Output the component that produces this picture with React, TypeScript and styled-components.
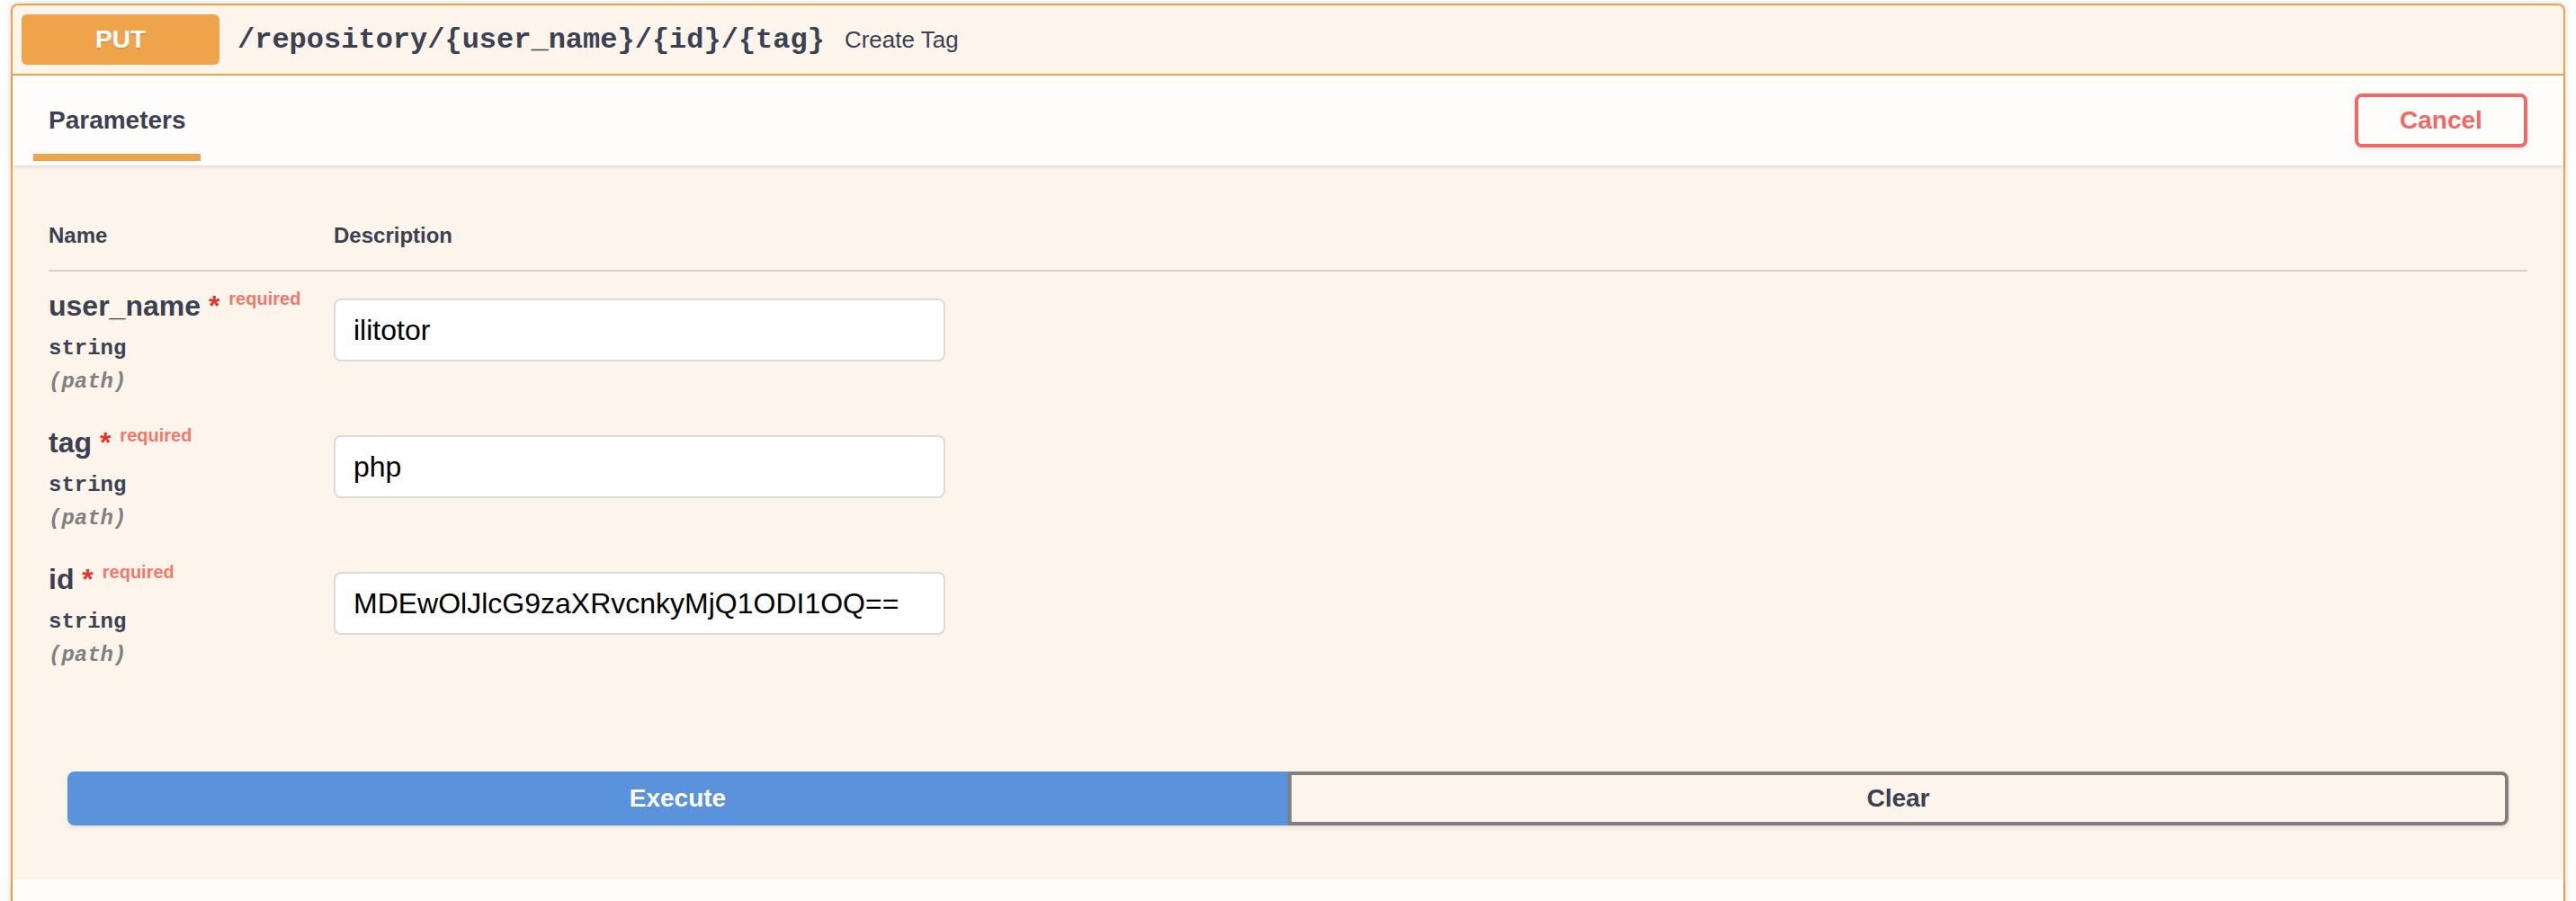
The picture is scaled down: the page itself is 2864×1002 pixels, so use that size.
import React from "react";
import styled, { createGlobalStyle } from "styled-components";

const ORANGE = "#efa44c";
const TEXT = "#3b4151";
const SANS = `"Liberation Sans", Arial, Helvetica, sans-serif`;
const MONO = `"Liberation Mono", "Courier New", monospace`;

const GlobalStyle = createGlobalStyle`
  html, body {
    margin: 0;
    padding: 0;
    background: #ffffff;
    overflow: hidden;
  }
  body {
    font-family: ${SANS};
    color: ${TEXT};
  }
  * { box-sizing: border-box; }
`;

const Page = styled.div`
  padding: 4px 12px 0;
`;

const OpBlock = styled.section`
  border: 2px solid ${ORANGE};
  border-radius: 8px;
  background: #fdf5ec;
  box-shadow: 0 0 6px rgba(0, 0, 0, 0.19);
`;

const Summary = styled.div`
  display: flex;
  align-items: center;
  padding: 10px;
  border-bottom: 2px solid ${ORANGE};
`;

const MethodBadge = styled.span`
  display: inline-block;
  width: 220px;
  height: 56px;
  line-height: 56px;
  border-radius: 6px;
  background: ${ORANGE};
  color: #ffffff;
  font-family: ${SANS};
  font-size: 28px;
  font-weight: 700;
  text-align: center;
  text-shadow: 0 2px 0 rgba(0, 0, 0, 0.1);
`;

const SummaryPath = styled.span`
  padding: 0 22px 0 20px;
  font-family: ${MONO};
  font-size: 32px;
  font-weight: 700;
  color: ${TEXT};
`;

const SummaryDescription = styled.span`
  font-family: ${SANS};
  font-size: 26px;
  color: ${TEXT};
`;

const SectionHeader = styled.div`
  display: flex;
  align-items: center;
  justify-content: space-between;
  min-height: 100px;
  padding: 16px 40px;
  background: rgba(255, 255, 255, 0.8);
  box-shadow: 0 2px 4px rgba(0, 0, 0, 0.1);
`;

const TabTitle = styled.h4`
  margin: 0;
  font-family: ${SANS};
  font-size: 28px;
  line-height: 32px;
  font-weight: 700;
  color: ${TEXT};
`;

const ActiveTabLabel = styled.span`
  position: relative;
  &::after {
    content: "";
    position: absolute;
    left: 50%;
    bottom: -30px;
    width: 122%;
    height: 8px;
    transform: translateX(-50%);
    background: ${ORANGE};
  }
`;

const CancelButton = styled.button`
  width: 192px;
  height: 60px;
  padding: 0;
  border: 4px solid #ee6a66;
  border-radius: 8px;
  background: transparent;
  color: #ee6a66;
  font-family: ${SANS};
  font-size: 28px;
  font-weight: 700;
  box-shadow: 0 2px 4px rgba(0, 0, 0, 0.1);
  cursor: pointer;
`;

const TableContainer = styled.div`
  padding: 40px;
`;

const TableRow = styled.div<{ $header?: boolean }>`
  display: grid;
  grid-template-columns: 317px 1fr;
  align-items: start;
  ${(p) =>
    p.$header
      ? `border-bottom: 2px solid rgba(59, 65, 81, 0.2);`
      : `height: 152px; padding-top: 20px;`}
`;

const HeaderCell = styled.div`
  padding: 24px 0;
  font-family: ${SANS};
  font-size: 24px;
  line-height: 28px;
  font-weight: 700;
  color: ${TEXT};
`;

const NameCell = styled.div`
  display: flex;
  flex-direction: column;
`;

const ParamName = styled.div`
  font-family: ${SANS};
  font-size: 32px;
  line-height: 37px;
  font-weight: 700;
  color: ${TEXT};
  white-space: nowrap;
`;

const Asterisk = styled.span`
  color: #ea3323;
`;

const RequiredTag = styled.span`
  position: relative;
  top: -12px;
  padding: 10px;
  font-size: 20px;
  font-weight: 700;
  color: #f2786c;
`;

const ParamType = styled.div`
  padding: 11px 0 10px;
  font-family: ${MONO};
  font-size: 24px;
  line-height: 27px;
  font-weight: 700;
  color: ${TEXT};
`;

const ParamIn = styled.div`
  font-family: ${MONO};
  font-size: 24px;
  line-height: 27px;
  font-weight: 700;
  font-style: italic;
  color: #808080;
`;

const TextInput = styled.input`
  display: block;
  width: 680px;
  height: 70px;
  margin: 10px 0 0;
  padding: 0 20px;
  border: 2px solid #dbdbdb;
  border-radius: 8px;
  background: #ffffff;
  color: #000000;
  font-family: ${SANS};
  font-size: 32px;
  outline: none;
`;

const BtnGroup = styled.div`
  display: flex;
  padding: 60px 61px;
`;

const GroupButton = styled.button<{ $variant: "execute" | "clear" }>`
  flex: 1;
  height: 60px;
  padding: 0;
  border: 4px solid ${(p) => (p.$variant === "execute" ? "#5a92dc" : "#808080")};
  border-radius: ${(p) => (p.$variant === "execute" ? "8px 0 0 8px" : "0 8px 8px 0")};
  background: ${(p) => (p.$variant === "execute" ? "#5a92dc" : "transparent")};
  color: ${(p) => (p.$variant === "execute" ? "#ffffff" : TEXT)};
  font-family: ${SANS};
  font-size: 28px;
  font-weight: 700;
  box-shadow: 0 2px 4px rgba(0, 0, 0, 0.1);
  cursor: pointer;
`;

type Param = { name: string; value: string };

const params: Param[] = [
  { name: "user_name", value: "ilitotor" },
  { name: "tag", value: "php" },
  { name: "id", value: "MDEwOlJlcG9zaXRvcnkyMjQ1ODI1OQ==" },
];

export default function App() {
  return (
    <>
      <GlobalStyle />
      <Page>
        <OpBlock>
          <Summary>
            <MethodBadge>PUT</MethodBadge>
            <SummaryPath>/repository/{"{user_name}"}/{"{id}"}/{"{tag}"}</SummaryPath>
            <SummaryDescription>Create Tag</SummaryDescription>
          </Summary>

          <SectionHeader>
            <TabTitle>
              <ActiveTabLabel>Parameters</ActiveTabLabel>
            </TabTitle>
            <CancelButton>Cancel</CancelButton>
          </SectionHeader>

          <TableContainer>
            <TableRow $header>
              <HeaderCell>Name</HeaderCell>
              <HeaderCell>Description</HeaderCell>
            </TableRow>
            {params.map((p) => (
              <TableRow key={p.name}>
                <NameCell>
                  <ParamName>
                    {p.name}
                    <Asterisk>{"\u00a0*"}</Asterisk>
                    <RequiredTag>required</RequiredTag>
                  </ParamName>
                  <ParamType>string</ParamType>
                  <ParamIn>(path)</ParamIn>
                </NameCell>
                <div>
                  <TextInput defaultValue={p.value} />
                </div>
              </TableRow>
            ))}
          </TableContainer>

          <BtnGroup>
            <GroupButton $variant="execute">Execute</GroupButton>
            <GroupButton $variant="clear">Clear</GroupButton>
          </BtnGroup>

          <SectionHeader />
        </OpBlock>
      </Page>
    </>
  );
}
